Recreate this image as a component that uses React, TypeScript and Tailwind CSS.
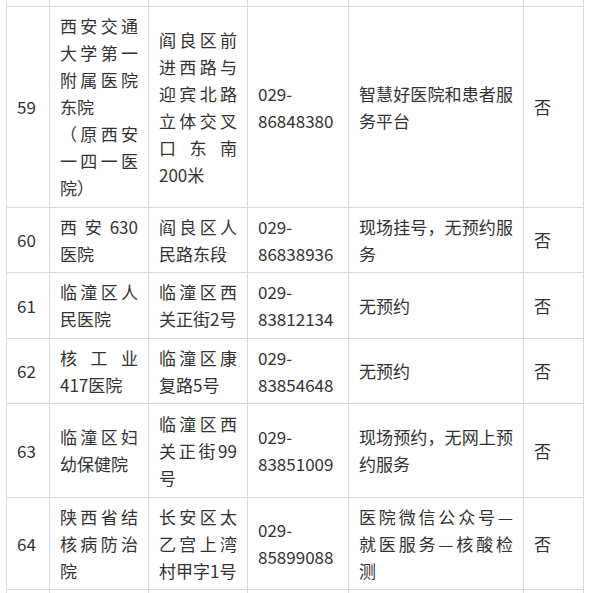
type Para = string[];

type Row = {
  no: string;
  name: Para[];
  addr: Para[];
  tel: string;
  way: Para[];
  h: string;
};

const rows: Row[] = [
  {
    no: "59",
    name: [
      ["西安交通", "大学第一", "附属医院", "东院"],
      ["（原西安", "一四一医", "院）"],
    ],
    addr: [["阎良区前", "进西路与", "迎宾北路", "立体交叉", "口东南", "200米"]],
    tel: "86848380",
    way: [["智慧好医院和患者服", "务平台"]],
    h: "h-[201px]",
  },
  {
    no: "60",
    name: [["西安630", "医院"]],
    addr: [["阎良区人", "民路东段"]],
    tel: "86838936",
    way: [["现场挂号，无预约服", "务"]],
    h: "h-[65px]",
  },
  {
    no: "61",
    name: [["临潼区人", "民医院"]],
    addr: [["临潼区西", "关正街2号"]],
    tel: "83812134",
    way: [["无预约"]],
    h: "h-[66px]",
  },
  {
    no: "62",
    name: [["核工业", "417医院"]],
    addr: [["临潼区康", "复路5号"]],
    tel: "83854648",
    way: [["无预约"]],
    h: "h-[65px]",
  },
  {
    no: "63",
    name: [["临潼区妇", "幼保健院"]],
    addr: [["临潼区西", "关正街99", "号"]],
    tel: "83851009",
    way: [["现场预约，无网上预", "约服务"]],
    h: "h-[94px]",
  },
  {
    no: "64",
    name: [["陕西省结", "核病防治", "院"]],
    addr: [["长安区太", "乙宫上湾", "村甲字1号"]],
    tel: "85899088",
    way: [["医院微信公众号—", "就医服务—核酸检", "测"]],
    h: "h-[91px]",
  },
];

const td = "border border-[#d9d9d9] px-[10px] py-[5px] align-middle";

function Lines({ paras }: { paras: Para[] }) {
  return (
    <>
      {paras.map((p, i) => (
        <div key={i}>
          {p.map((line, j) => (
            <div
              key={j}
              className={
                j < p.length - 1 && p.length > 1 && !(i === 0 && paras.length > 1 && j === p.length - 1)
                  ? "[text-align-last:justify] text-justify"
                  : ""
              }
            >
              {line}
            </div>
          ))}
        </div>
      ))}
    </>
  );
}

function spreadAll(p: Para[]): Para[] {
  return p;
}

export default function App() {
  return (
    <div
      className="min-h-[593px] overflow-hidden bg-white pl-[6px] text-[17px] leading-[27px] text-[#333]"
      style={{ fontFamily: '"Noto Sans CJK SC", "Microsoft YaHei", sans-serif' }}
    >
      <table className="w-[577px] table-fixed border-collapse">
        <colgroup>
          <col className="w-[43px]" />
          <col className="w-[99px]" />
          <col className="w-[99px]" />
          <col className="w-[101px]" />
          <col className="w-[175px]" />
          <col className="w-[60px]" />
        </colgroup>
        <tbody>
          <tr className="h-[6px]">
            {[0, 1, 2, 3, 4, 5].map((i) => (
              <td key={i} className="border border-t-0 border-[#d9d9d9] p-0" />
            ))}
          </tr>
          {rows.map((r) => (
            <tr key={r.no} className={r.h}>
              <td className={td}>{r.no}</td>
              <td className={td}>
                <Lines paras={spreadAll(r.name)} />
              </td>
              <td className={td}>
                <Lines paras={r.addr} />
              </td>
              <td className={td}>
                <div>029-</div>
                <div>{r.tel}</div>
              </td>
              <td className={td}>
                <Lines paras={r.way} />
              </td>
              <td className={td}>否</td>
            </tr>
          ))}
          <tr className="h-[20px]">
            {[0, 1, 2, 3, 4, 5].map((i) => (
              <td key={i} className="border border-[#d9d9d9] p-0" />
            ))}
          </tr>
        </tbody>
      </table>
    </div>
  );
}
